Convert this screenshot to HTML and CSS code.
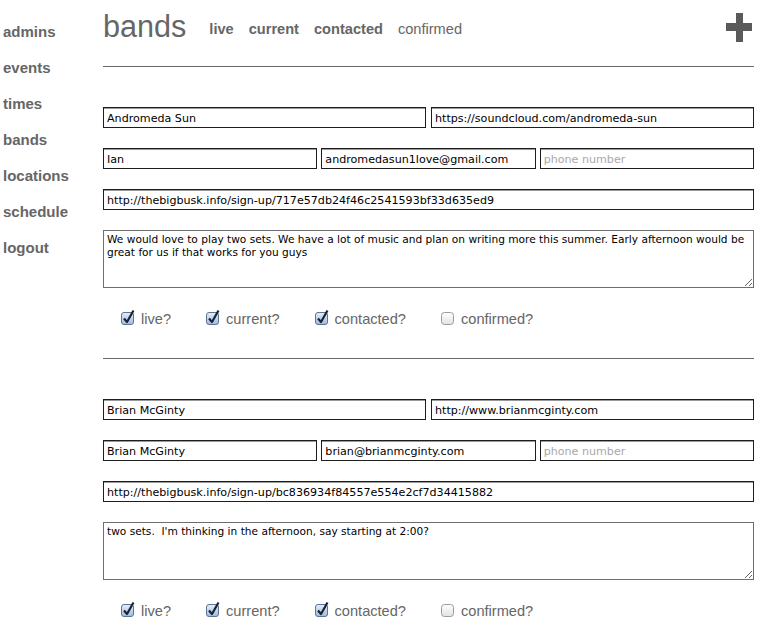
FILE: index.html
```html
<!DOCTYPE html>
<html>
<head>
<meta charset="utf-8">
<title>bands</title>
<link rel="stylesheet" href="styles.css">
</head>
<body>
<div class="page">
  <nav class="sidebar">
    <a href="#">admins</a>
    <a href="#">events</a>
    <a href="#">times</a>
    <a href="#">bands</a>
    <a href="#">locations</a>
    <a href="#">schedule</a>
    <a href="#">logout</a>
  </nav>
  <main class="main">
    <header class="header">
      <h1 class="title">bands</h1>
      <div class="filters">
        <a href="#" class="filter on">live</a>
        <a href="#" class="filter on">current</a>
        <a href="#" class="filter on">contacted</a>
        <a href="#" class="filter">confirmed</a>
      </div>
      <a href="#" class="add" aria-label="add band">
        <svg width="26" height="29" viewBox="0 0 26 29"><rect x="10" y="0" width="7" height="29" fill="#5a5a5a"/><rect x="0" y="10" width="26" height="8" fill="#5a5a5a"/></svg>
      </a>
    </header>
    <hr class="rule">

    <section class="band">
      <div class="row two">
        <input class="field" type="text" value="Andromeda Sun">
        <input class="field" type="text" value="https://soundcloud.com/andromeda-sun">
      </div>
      <div class="row three">
        <input class="field" type="text" value="Ian">
        <input class="field" type="text" value="andromedasun1love@gmail.com">
        <input class="field" type="text" placeholder="phone number">
      </div>
      <div class="row one">
        <input class="field" type="text" value="http://thebigbusk.info/sign-up/717e57db24f46c2541593bf33d635ed9">
      </div>
      <textarea class="notes">We would love to play two sets. We have a lot of music and plan on writing more this summer. Early afternoon would be great for us if that works for you guys</textarea>
      <div class="checks">
        <label class="check"><span class="box checked"><svg width="15" height="17" viewBox="0 0 15 17"><defs><linearGradient id="g1" x1="0" y1="0" x2="0" y2="1"><stop offset="0" stop-color="#e4eefa"/><stop offset="1" stop-color="#9dbbe3"/></linearGradient></defs><rect x="0.5" y="3.5" width="12" height="12" rx="2.5" fill="url(#g1)" stroke="#5d7496"/><path d="M3 9.5 L6 13 L12.5 1.5" fill="none" stroke="#1c2430" stroke-width="2.2" stroke-linejoin="round"/></svg></span>live?</label>
        <label class="check"><span class="box checked"><svg width="15" height="17" viewBox="0 0 15 17"><rect x="0.5" y="3.5" width="12" height="12" rx="2.5" fill="url(#g1)" stroke="#5d7496"/><path d="M3 9.5 L6 13 L12.5 1.5" fill="none" stroke="#1c2430" stroke-width="2.2" stroke-linejoin="round"/></svg></span>current?</label>
        <label class="check"><span class="box checked"><svg width="15" height="17" viewBox="0 0 15 17"><rect x="0.5" y="3.5" width="12" height="12" rx="2.5" fill="url(#g1)" stroke="#5d7496"/><path d="M3 9.5 L6 13 L12.5 1.5" fill="none" stroke="#1c2430" stroke-width="2.2" stroke-linejoin="round"/></svg></span>contacted?</label>
        <label class="check"><span class="box"><svg width="15" height="17" viewBox="0 0 15 17"><defs><linearGradient id="g2" x1="0" y1="0" x2="0" y2="1"><stop offset="0" stop-color="#ffffff"/><stop offset="1" stop-color="#e2e2e2"/></linearGradient></defs><rect x="0.5" y="3.5" width="12" height="12" rx="3" fill="url(#g2)" stroke="#9a9a9a"/></svg></span>confirmed?</label>
      </div>
    </section>
    <hr class="rule">

    <section class="band">
      <div class="row two">
        <input class="field" type="text" value="Brian McGinty">
        <input class="field" type="text" value="http://www.brianmcginty.com">
      </div>
      <div class="row three">
        <input class="field" type="text" value="Brian McGinty">
        <input class="field" type="text" value="brian@brianmcginty.com">
        <input class="field" type="text" placeholder="phone number">
      </div>
      <div class="row one">
        <input class="field" type="text" value="http://thebigbusk.info/sign-up/bc836934f84557e554e2cf7d34415882">
      </div>
      <textarea class="notes">two sets.  I'm thinking in the afternoon, say starting at 2:00?</textarea>
      <div class="checks">
        <label class="check"><span class="box checked"><svg width="15" height="17" viewBox="0 0 15 17"><rect x="0.5" y="3.5" width="12" height="12" rx="2.5" fill="url(#g1)" stroke="#5d7496"/><path d="M3 9.5 L6 13 L12.5 1.5" fill="none" stroke="#1c2430" stroke-width="2.2" stroke-linejoin="round"/></svg></span>live?</label>
        <label class="check"><span class="box checked"><svg width="15" height="17" viewBox="0 0 15 17"><rect x="0.5" y="3.5" width="12" height="12" rx="2.5" fill="url(#g1)" stroke="#5d7496"/><path d="M3 9.5 L6 13 L12.5 1.5" fill="none" stroke="#1c2430" stroke-width="2.2" stroke-linejoin="round"/></svg></span>current?</label>
        <label class="check"><span class="box checked"><svg width="15" height="17" viewBox="0 0 15 17"><rect x="0.5" y="3.5" width="12" height="12" rx="2.5" fill="url(#g1)" stroke="#5d7496"/><path d="M3 9.5 L6 13 L12.5 1.5" fill="none" stroke="#1c2430" stroke-width="2.2" stroke-linejoin="round"/></svg></span>contacted?</label>
        <label class="check"><span class="box"><svg width="15" height="17" viewBox="0 0 15 17"><rect x="0.5" y="3.5" width="12" height="12" rx="3" fill="url(#g2)" stroke="#9a9a9a"/></svg></span>confirmed?</label>
      </div>
    </section>
  </main>
</div>
</body>
</html>
```
FILE: styles.css
```css
* { box-sizing: border-box; }

html, body {
  margin: 0;
  padding: 0;
  background: #fff;
}

body {
  font-family: "Liberation Sans", Arial, sans-serif;
  color: #666;
  overflow: hidden;
}

.page {
  display: flex;
  align-items: flex-start;
}

.sidebar {
  width: 103px;
  flex: none;
  padding: 14px 0 0 3px;
  display: flex;
  flex-direction: column;
}

.sidebar a {
  font-size: 15px;
  font-weight: bold;
  line-height: 36px;
  color: #666;
  text-decoration: none;
}

.main {
  width: 651px;
  flex: none;
}

.header {
  display: flex;
  align-items: flex-start;
  padding-top: 8px;
  height: 44px;
}

.title {
  margin: 0;
  font-size: 30.6px;
  font-weight: normal;
  line-height: 36px;
  color: #666;
}

.filters {
  display: flex;
  gap: 15px;
  margin-left: 23px;
  padding-top: 12px;
}

.filter {
  font-size: 14.6px;
  line-height: 18px;
  color: #666;
  text-decoration: none;
}

.filter.on {
  font-weight: bold;
}

.add {
  margin-left: auto;
  margin-right: 2px;
  margin-top: 5px;
  display: block;
  line-height: 0;
}

.rule {
  margin: 22px 0 0;
  border: 0;
  border-top: 1px solid #6a6a6a;
  height: 0;
}

.band + .rule {
  margin-top: 0;
}

.band {
  display: flex;
  flex-direction: column;
  gap: 20px;
  padding: 40px 0 29px;
}

.row {
  display: grid;
}

.row.two {
  grid-template-columns: 1fr 1fr;
  gap: 5px;
}

.row.three {
  grid-template-columns: 1fr 1fr 1fr;
  gap: 4px;
}

.field {
  height: 21px;
  width: 100%;
  margin: 0;
  padding: 1px 3px 0;
  border: 1px solid #1e1e1e;
  border-radius: 0;
  box-shadow: inset 0 1px 0 #9a9a9a;
  font-family: "DejaVu Sans", sans-serif;
  font-size: 11.12px;
  color: #000;
  background: #fff;
  outline: none;
}

.field::placeholder {
  color: #a9a9a9;
}

.notes {
  display: block;
  width: 100%;
  height: 58px;
  margin: 0;
  padding: 2px 3px;
  border: 1px solid #6e6e6e;
  border-radius: 0;
  font-family: "DejaVu Sans", sans-serif;
  font-size: 10.6px;
  line-height: 13px;
  color: #000;
  resize: vertical;
  outline: none;
}

.checks {
  display: flex;
  align-items: center;
  gap: 35px;
  height: 21px;
  padding: 1px 0 0 18px;
}

.check {
  display: flex;
  align-items: center;
  gap: 5px;
  font-size: 14.6px;
  color: #666;
  line-height: 20px;
}

.box {
  display: block;
  line-height: 0;
  margin-top: -3px;
}
```
